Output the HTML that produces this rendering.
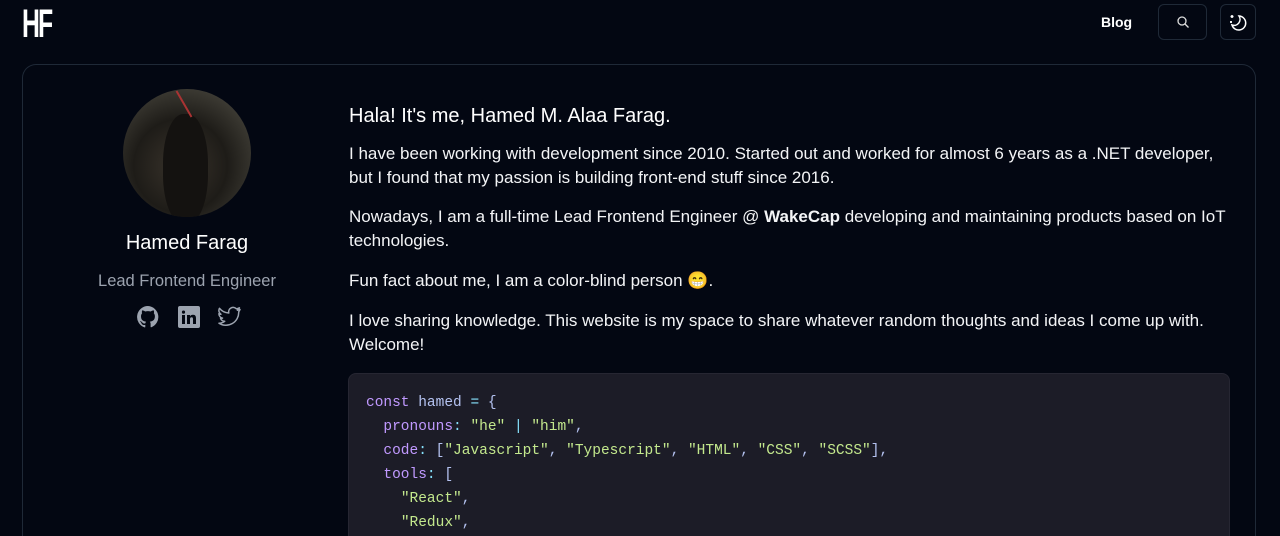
<!DOCTYPE html>
<html style="overflow:hidden;height:536px"><head><meta charset="utf-8"><style>
*{margin:0;padding:0;box-sizing:border-box}
body{width:1280px;height:536px;overflow:hidden;background:#030712;color:#f3f4f6;font-family:"Liberation Sans",sans-serif;position:relative}
.logo{position:absolute;left:22px;top:4px;font:bold 40px/1 "Liberation Sans",sans-serif;color:#fff;letter-spacing:-3px;transform:scaleX(0.62);transform-origin:left}
.blog{position:absolute;left:1101px;top:14px;font-size:14px;font-weight:bold;color:#fff}
.btn{position:absolute;top:4px;height:36px;border:1px solid #1f2937;border-radius:6px;display:flex;align-items:center;justify-content:center}
.card{position:absolute;left:22px;top:64px;width:1234px;height:472px;border:1px solid #1f2937;border-bottom:none;border-radius:14px 14px 0 0}
.av{position:absolute;left:123px;top:89px;width:128px;height:128px;border-radius:50%;background:radial-gradient(circle at 45% 60%,#3a342c 0%,#1e1c18 45%,#3c3a33 75%,#2a2924 100%);overflow:hidden}
.name{position:absolute;left:22px;width:330px;top:232px;text-align:center;font-size:20px;color:#fff}
.role{position:absolute;left:22px;width:330px;top:272px;text-align:center;font-size:16.5px;color:#9ca3af}
.icons{position:absolute;left:136px;top:305px;display:flex;gap:17px}
.main{position:absolute;left:349px;top:104px;width:880px;font-size:17px;line-height:24px;color:#f3f4f6}
.main h1{font-size:20px;font-weight:normal;margin-bottom:14px;color:#fff}
.main p{margin-bottom:15px}
.code{position:absolute;left:348px;top:373px;width:882px;height:163px;overflow:hidden;background:#1c1c27;border-radius:8px 8px 0 0;border:1px solid #262632;border-bottom:none;padding:17px 17px;font:14.5px/24px "Liberation Mono",monospace;color:#b4c2f0;white-space:pre}
.k{color:#c099ff}.s{color:#c3e88d}.p{color:#c099ff}.b{color:#86e1fc}
</style></head><body>
<div class="logo">HF</div>
<div class="blog">Blog</div>
<div class="btn" style="left:1158px;width:49px"><svg width="14" height="14" viewBox="0 0 14 14" fill="none" stroke="#ddd" stroke-width="1.3"><circle cx="6" cy="6" r="4"/><path d="M9 9l3.5 3.5"/></svg></div>
<div class="btn" style="left:1220px;width:36px"><svg width="22" height="22" viewBox="0 0 22 22" fill="none" stroke="#fff" stroke-width="1.5"><path d="M12 5a7 7 0 1 1-7 9a6 6 0 0 0 7-9z"/><path d="M5 4v3M3.5 5.5h3M4 10v2M3 11h2"/></svg></div>
<div class="card"></div>
<div class="av"><div style="position:absolute;left:40px;top:25px;width:45px;height:110px;border-radius:45%;background:#141210"></div><div style="position:absolute;left:60px;top:0;width:2px;height:30px;background:#a33;transform:rotate(-30deg)"></div></div>
<div class="name">Hamed Farag</div>
<div class="role">Lead Frontend Engineer</div>
<div class="icons">
<svg width="24" height="24" viewBox="0 0 24 24" fill="#9ca3af"><path d="M12 1a11 11 0 0 0-3.5 21.4c.6.1.8-.2.8-.5v-2c-3.1.7-3.7-1.4-3.7-1.4-.5-1.3-1.2-1.6-1.2-1.6-1-.7.1-.7.1-.7 1.1.1 1.7 1.1 1.7 1.1 1 1.7 2.6 1.2 3.2.9.1-.7.4-1.2.7-1.5-2.5-.3-5.1-1.2-5.1-5.4 0-1.2.4-2.2 1.1-3-.1-.3-.5-1.4.1-2.9 0 0 .9-.3 3 1.1a10 10 0 0 1 5.5 0c2.1-1.4 3-1.1 3-1.1.6 1.5.2 2.6.1 2.9.7.8 1.1 1.8 1.1 3 0 4.2-2.6 5.1-5.1 5.4.4.4.8 1 .8 2v3c0 .3.2.6.8.5A11 11 0 0 0 12 1z"/></svg>
<svg width="24" height="24" viewBox="0 0 24 24"><rect x="1" y="1" width="22" height="22" rx="2" fill="#9ca3af"/><path d="M5 10h3v9H5zM6.5 5.5a1.6 1.6 0 1 1 0 3.2a1.6 1.6 0 0 1 0-3.2zM10 10h3v1.3c.5-.9 1.6-1.5 3-1.5 2.5 0 3 1.6 3 3.8V19h-3v-4.8c0-1.2-.3-2-1.4-2s-1.6.8-1.6 2V19h-3z" fill="#030712"/></svg>
<svg width="24" height="24" viewBox="0 0 24 24" fill="none" stroke="#9ca3af" stroke-width="1.5" stroke-linejoin="round"><path d="M22 4.5a9 9 0 0 1-2.6.8 4.5 4.5 0 0 0 2-2.5 9 9 0 0 1-2.9 1.1 4.5 4.5 0 0 0-7.7 4.1A12.8 12.8 0 0 1 1.5 3.3a4.5 4.5 0 0 0 1.4 6 4.5 4.5 0 0 1-2-.6 4.5 4.5 0 0 0 3.6 4.4 4.5 4.5 0 0 1-2 .1 4.5 4.5 0 0 0 4.2 3.1A9 9 0 0 1 1 18.2a12.8 12.8 0 0 0 19.7-11.4A9 9 0 0 0 22 4.5z"/></svg>
</div>
<div class="main">
<h1>Hala! It's me, Hamed M. Alaa Farag.</h1>
<p>I have been working with development since 2010. Started out and worked for almost 6 years as a .NET developer, but I found that my passion is building front-end stuff since 2016.</p>
<p>Nowadays, I am a full-time Lead Frontend Engineer @ <b>WakeCap</b> developing and maintaining products based on IoT technologies.</p>
<p style="margin-top:16px">Fun fact about me, I am a color-blind person 😁.</p>
<p style="margin-top:16px">I love sharing knowledge. This website is my space to share whatever random thoughts and ideas I come up with. Welcome!</p>
</div>
<div class="code"><span class="k">const</span> hamed <span class="b">=</span> {
  <span class="p">pronouns</span><span class="b">:</span> <span class="s">"he"</span> <span class="b">|</span> <span class="s">"him"</span>,
  <span class="p">code</span><span class="b">:</span> [<span class="s">"Javascript"</span>, <span class="s">"Typescript"</span>, <span class="s">"HTML"</span>, <span class="s">"CSS"</span>, <span class="s">"SCSS"</span>],
  <span class="p">tools</span><span class="b">:</span> [
    <span class="s">"React"</span>,
    <span class="s">"Redux"</span>,</div>
</body></html>
